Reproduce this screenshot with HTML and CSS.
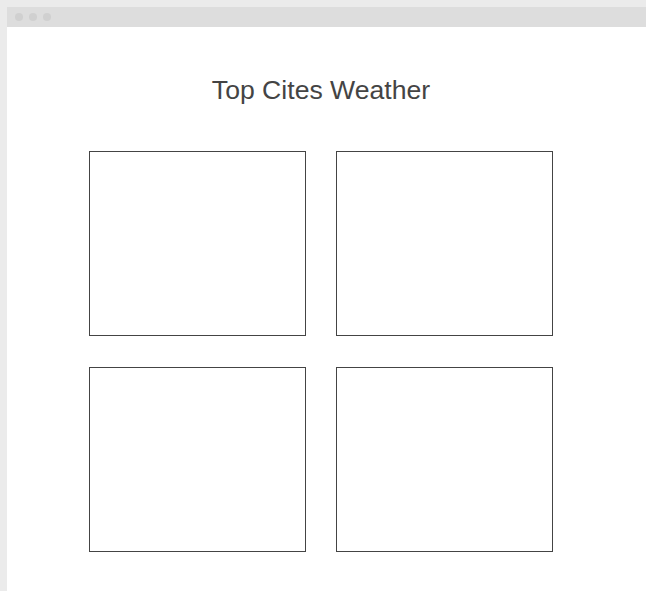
FILE: index.html
```html
<!DOCTYPE html>
<html>
<head>
<meta charset="utf-8">
<link rel="stylesheet" href="styles.css">
</head>
<body>
<div class="window">
  <div class="titlebar">
    <span class="dot"></span><span class="dot"></span><span class="dot"></span>
  </div>
  <div class="content">
    <h1 class="title">Top Cites Weather</h1>
    <div class="grid">
      <div class="card"></div>
      <div class="card"></div>
      <div class="card"></div>
      <div class="card"></div>
    </div>
  </div>
</div>
</body>
</html>
```
FILE: styles.css
```css
html, body {
  margin: 0;
  padding: 0;
  height: 100%;
}
body {
  background: #ebebeb;
  font-family: "Liberation Sans", Arial, sans-serif;
  overflow: hidden;
}
.window {
  margin: 7px 0 0 7px;
  background: #ffffff;
  min-height: 584px;
}
.titlebar {
  height: 20px;
  background: #dddddd;
  display: flex;
  align-items: center;
  gap: 6px;
  padding-left: 8px;
}
.dot {
  width: 8px;
  height: 8px;
  border-radius: 50%;
  background: #d0d0d0;
}
.content {
  width: 628px;
  padding-top: 48px;
}
.title {
  margin: 0;
  font-size: 26.6px;
  line-height: 30px;
  font-weight: normal;
  color: #444444;
  text-align: center;
}
.grid {
  margin: 46px 0 0 82px;
  display: grid;
  grid-template-columns: 217px 217px;
  grid-template-rows: 185px 185px;
  column-gap: 30px;
  row-gap: 31px;
}
.card {
  box-sizing: border-box;
  border: 1px solid #444444;
  background: #ffffff;
}
```
